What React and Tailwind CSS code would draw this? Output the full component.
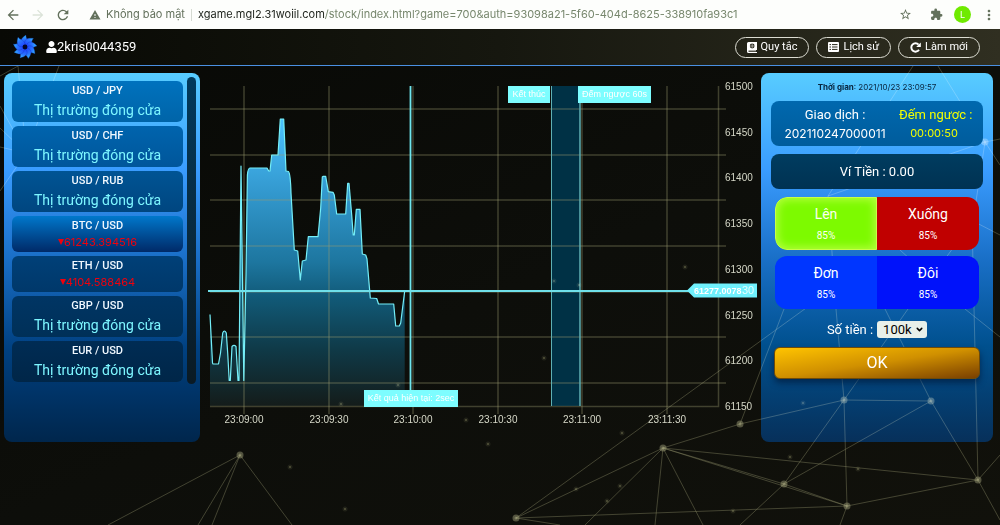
import { useState } from 'react';
import clsx from 'clsx';
import { FaUser } from 'react-icons/fa';
import { ChevronDown } from 'lucide-react';
import {
  MdArrowBack,
  MdArrowForward,
  MdExtension,
  MdMoreVert,
  MdRefresh,
  MdStarBorder,
  MdWarning,
} from 'react-icons/md';

const CLOSED = 'Thị trường đóng cửa';

const PAIRS = [
  { name: 'USD / JPY', bg: 'from-[#0072be] to-[#0064a8]' },
  { name: 'USD / CHF', bg: 'from-[#0064ae] to-[#00569a]' },
  { name: 'USD / RUB', bg: 'from-[#005494] to-[#004680]' },
  { name: 'BTC / USD', price: '61243.394516', bg: 'from-[#0078cc] to-[#002a68]' },
  { name: 'ETH / USD', price: '4104.588464', bg: 'from-[#004078] to-[#00386a]' },
  { name: 'GBP / USD', bg: 'from-[#003564] to-[#003058]' },
  { name: 'EUR / USD', bg: 'from-[#002c54] to-[#002648]' },
];

const X_TICKS = [
  { x: 44, label: '23:09:00' },
  { x: 129, label: '23:09:30' },
  { x: 213, label: '23:10:00' },
  { x: 298, label: '23:10:30' },
  { x: 382, label: '23:11:00' },
  { x: 467, label: '23:11:30' },
];

const Y_TICKS = [
  { y: 13, label: '61500' },
  { y: 59, label: '61450' },
  { y: 104, label: '61400' },
  { y: 150, label: '61350' },
  { y: 196, label: '61300' },
  { y: 242, label: '61250' },
  { y: 287, label: '61200' },
  { y: 333, label: '61150' },
];

const GRID_ROWS = [36, 82, 127, 173, 219, 264, 310];

const PRICE_LINE =
  'M10 241.5 L12.5 290 L13 291 L18.5 291 L20.5 280 L22.7 260 Q24.3 256 26.3 260 L27.7 280 L29.2 307.5 L30.3 307.5 ' +
  'L32 273.5 Q34 271.5 36 273.5 L38 307.5 L39 307.5 L41 93 L43.8 307.5 L46 202 L47.4 102 Q48 95 50 95 L67 95 L68.7 98 L70 98 ' +
  'L71.7 82 L78 82 L80.3 46 L83.7 46 L86 98 L88.5 98.5 Q90.5 101 91 120 L94.3 177 L97.7 178 L100.3 207 L102.3 188 L106 187 ' +
  'L108.3 163.7 L118 163.7 L120.7 135 L122.3 104 L123 103.3 L125.7 103.3 L128.3 118.7 L133 119.3 L134.3 122 L136.7 141 ' +
  'L145.7 141 L147.7 110.3 L149 110.3 L151.7 142 L153.2 162 L154.3 162 L156.3 136.3 L160 136.3 L162.3 181 L165.7 182 ' +
  'L167 186 L170.3 225 L176.7 225.5 L178.5 231 L193.7 231 L195.7 253 L199.3 253 L200.7 250 L204.7 218';

const LINKS = [
  [240, 455, 108, 525], [240, 455, 198, 525], [240, 455, 212, 525], [240, 455, 292, 525],
  [663, 448, 516, 518], [663, 448, 585, 525], [663, 448, 655, 525], [663, 448, 703, 525],
  [663, 448, 784, 484], [663, 448, 978, 480], [663, 448, 740, 424], [663, 448, 847, 506],
  [740, 424, 844, 400], [740, 424, 784, 309], [516, 518, 831, 290], [516, 518, 847, 506],
  [516, 518, 560, 525], [784, 484, 847, 506], [784, 484, 844, 400], [784, 484, 740, 525],
  [784, 484, 931, 401], [847, 506, 844, 400], [847, 506, 840, 525], [844, 400, 931, 401],
  [844, 400, 836, 309], [844, 400, 908, 309], [931, 401, 885, 309], [931, 401, 978, 480],
  [978, 480, 972, 221], [978, 480, 847, 506], [978, 480, 1000, 520], [978, 480, 1000, 455],
  [965, 309, 1000, 337], [965, 309, 900, 250], [836, 309, 828, 196], [908, 309, 973, 221],
  [828, 196, 913, 66], [938, 66, 985, 142], [985, 142, 1000, 139], [985, 142, 1000, 165],
  [985, 142, 973, 221], [973, 221, 1000, 235], [985, 142, 828, 196],
  [26, 153, 18, 66], [26, 153, 59, 66], [26, 153, 0, 106], [26, 153, 0, 128],
  [26, 153, 0, 147], [26, 153, 0, 191], [18, 66, 0, 76],
];

const NODES = [
  [240, 455], [663, 448], [740, 424], [844, 400], [931, 401],
  [978, 480], [784, 484], [847, 506], [516, 518], [985, 142], [26, 153],
];

const SPARKS = [
  [544, 358], [579, 285], [685, 267], [398, 385], [341, 404], [466, 420],
  [622, 433], [488, 444], [576, 489], [620, 486], [607, 501], [290, 467],
  [345, 509], [790, 457], [858, 469], [803, 403], [733, 511], [554, 281],
];

function AddressBar() {
  return (
    <div className="flex h-[29px] items-center bg-[#fdfefc] px-[5px] font-[Inter,sans-serif] text-[#63715c]">
      <MdArrowBack className="size-4 shrink-0" />
      <MdArrowForward className="ml-[9px] size-4 shrink-0 text-[#dbe3d8]" />
      <MdRefresh className="ml-[9px] size-4 shrink-0" />
      <MdWarning className="ml-[18px] size-3 shrink-0" />
      <span className="ml-[5px] shrink-0 text-[11px]">Không bảo mật</span>
      <span className="mx-[6px] h-3 w-px bg-[#d5dad2]" />
      <span className="min-w-0 flex-1 truncate text-[11px] text-[#77876d]">
        <span className="text-[#1c211a]">xgame.mgl2.31woiil.com</span>
        /stock/index.html?game=700&amp;auth=93098a21-5f60-404d-8625-338910fa93c1
      </span>
      <MdStarBorder className="size-[13px] shrink-0" />
      <MdExtension className="ml-[18px] size-[13px] shrink-0" />
      <span className="ml-[11px] flex size-[17px] shrink-0 items-center justify-center rounded-full bg-[#6fea00] text-[9px] text-white">
        L
      </span>
      <MdMoreVert className="ml-2 -mr-1 h-4 w-5 shrink-0" />
    </div>
  );
}

function Logo() {
  return (
    <svg viewBox="-12 -12 24 24" className="size-6 shrink-0" aria-hidden="true">
      <defs>
        <linearGradient id="petal" x1="0" y1="0" x2="0" y2="1">
          <stop offset="0" stopColor="#35c8ff" />
          <stop offset="0.4" stopColor="#2a78ff" />
          <stop offset="1" stopColor="#1f48ff" />
        </linearGradient>
      </defs>
      {[0, 40, 80, 120, 160, 200, 240, 280, 320].map((angle) => (
        <path
          key={angle}
          d="M-2 -2 C-6 -5 -4 -9 1 -12 C0.5 -9 4 -7 2 -2 Z"
          fill="url(#petal)"
          stroke="#1230b8"
          strokeWidth="0.3"
          transform={`rotate(${angle})`}
        />
      ))}
      <circle r="2.4" fill="#04062a" />
    </svg>
  );
}

function RulesIcon() {
  return (
    <svg viewBox="0 0 10 11" className="h-[11px] w-[10px]" aria-hidden="true">
      <path d="M1.5 0H10V8H9V10H10V11H1.5A1.5 1.5 0 0 1 0 9.5V1.5A1.5 1.5 0 0 1 1.5 0Z" fill="#fff" />
      <path d="M1.5 8.6H9V9.8H1.5Z" fill="#2a291d" />
      <circle cx="5.2" cy="4" r="2.4" fill="#2a291d" />
      <path d="M2.8 4H7.6M5.2 1.6V6.4" stroke="#fff" strokeWidth="0.5" />
    </svg>
  );
}

function HistoryIcon() {
  return (
    <svg viewBox="0 0 11 10" className="h-[10px] w-[11px]" aria-hidden="true">
      <rect width="11" height="10" rx="1" fill="#fff" />
      <path d="M1.5 2.6H3M1.5 5H3M1.5 7.4H3M4 2.6H9.5M4 5H9.5M4 7.4H9.5" stroke="#2a291d" strokeWidth="1" />
    </svg>
  );
}

function ReloadIcon() {
  return (
    <svg viewBox="0 0 11 11" className="size-[11px]" aria-hidden="true">
      <path d="M9 7.8A4.2 4.2 0 1 1 8.6 2.6" fill="none" stroke="#fff" strokeWidth="2" />
      <path d="M10.8 0.4V5H6.2Z" fill="#fff" />
    </svg>
  );
}

function HeaderButton({ icon, children }) {
  return (
    <button className="flex h-[21px] items-center gap-1 rounded-full border border-[#dcdcd2] px-[11px] text-[11px] text-white">
      {icon}
      {children}
    </button>
  );
}

function Header() {
  return (
    <header className="flex h-[37px] items-center border-b border-[#4a90e2] bg-linear-to-r from-[#080905] via-[#16170f] to-[#302f21] pr-5 pl-[13px]">
      <Logo />
      <FaUser className="ml-[9px] h-[12px] w-[11px] text-white" />
      <span className="text-[13px] text-white">2kris0044359</span>
      <nav className="ml-auto flex gap-[7px]">
        <HeaderButton icon={<RulesIcon />}>Quy tắc</HeaderButton>
        <HeaderButton icon={<HistoryIcon />}>Lịch sử</HeaderButton>
        <HeaderButton icon={<ReloadIcon />}>Làm mới</HeaderButton>
      </nav>
    </header>
  );
}

function Network() {
  return (
    <svg
      viewBox="0 66 1000 459"
      preserveAspectRatio="xMidYMin slice"
      className="pointer-events-none absolute inset-0 size-full mix-blend-screen"
      aria-hidden="true"
    >
      <g stroke="#8a8a64" strokeOpacity="0.4">
        {LINKS.map(([x1, y1, x2, y2], i) => (
          <line key={i} x1={x1} y1={y1} x2={x2} y2={y2} />
        ))}
      </g>
      {NODES.map(([x, y]) => (
        <g key={`${x}-${y}`} fill="#a0a078">
          <circle cx={x} cy={y} r="3.5" fillOpacity="0.45" />
          <circle cx={x} cy={y} r="1.5" fillOpacity="0.5" />
        </g>
      ))}
      {SPARKS.map(([x, y]) => (
        <g key={`${x}-${y}`} fill="#a0a070">
          <circle cx={x} cy={y} r="2.5" fillOpacity="0.12" />
          <circle cx={x} cy={y} r="1" fillOpacity="0.4" />
        </g>
      ))}
    </svg>
  );
}

function PairList({ selected, onSelect }) {
  return (
    <aside className="rounded-lg bg-[linear-gradient(#58ccff,#3a9cff_26%,#1a6fc8_50%,#004080_75%,#00264c)]">
      <div className="relative z-10 flex gap-1 pt-1 pr-1 pl-2">
        <ul className="flex flex-1 flex-col gap-1 pt-1">
          {PAIRS.map((pair) => (
            <li key={pair.name}>
              <button
                onClick={() => onSelect(pair.name)}
                aria-pressed={selected === pair.name}
                className={clsx(
                  'flex w-full flex-col items-center rounded-md bg-linear-to-b pt-[2px]',
                  pair.price ? 'h-9' : 'h-[41px]',
                  pair.bg
                )}
              >
                <span className="text-[11px] leading-4 font-medium text-[#f0f8ff]">{pair.name}</span>
                {pair.price ? (
                  <span className="flex items-center font-[Inter,sans-serif] text-[11px] leading-4 text-[#f0000c]">
                    <svg viewBox="0 0 6 6" className="size-[6px]" aria-hidden="true">
                      <path d="M0 0H6L3 6Z" fill="currentColor" />
                    </svg>
                    {pair.price}
                  </span>
                ) : (
                  <span className="text-[14px] leading-[22px] text-[#7df6ff]">{CLOSED}</span>
                )}
              </button>
            </li>
          ))}
        </ul>
        <div className="h-[307px] w-[9px] rounded-full bg-linear-to-b from-[#003a5c] to-[#0a1a24]" />
      </div>
    </aside>
  );
}

function ChartTag({ x, y, width, children }) {
  return (
    <g>
      <rect x={x} y={y} width={width} height="17" fill="#7dfdff" />
      <text x={x + width / 2} y={y + 11} textAnchor="middle" fill="#fff" fontSize="9">
        {children}
      </text>
    </g>
  );
}

function Chart() {
  return (
    <svg viewBox="0 0 561 369" className="h-auto w-full font-['Liberation_Sans',Arial,sans-serif]" role="img" aria-label="BTC / USD">
      <defs>
        <linearGradient id="area" gradientUnits="userSpaceOnUse" x1="0" y1="46" x2="0" y2="333">
          <stop offset="0" stopColor="#4cc2ff" />
          <stop offset="0.25" stopColor="#3399cf" />
          <stop offset="0.5" stopColor="#1d769f" />
          <stop offset="0.62" stopColor="#115a78" />
          <stop offset="0.8" stopColor="#0f3a48" />
          <stop offset="1" stopColor="#141c1a" />
        </linearGradient>
      </defs>

      <path d={`${PRICE_LINE} L204.7 333 L10 333 Z`} fill="url(#area)" />
      <rect x="352" y="13" width="28" height="320" fill="#003145" />

      <g stroke="#9a9a70" strokeOpacity="0.36" strokeWidth="1.5">
        {X_TICKS.map(({ x }) => (
          <line key={x} x1={x} y1="13" x2={x} y2="341" />
        ))}
        {GRID_ROWS.map((y) => (
          <line key={y} x1="10" y1={y} x2="526" y2={y} />
        ))}
        <path d="M10 333.5H518.5V13" fill="none" />
      </g>

      <g stroke="#5fb0b4">
        <line x1="351.5" y1="13" x2="351.5" y2="333" />
        <line x1="380" y1="13" x2="380" y2="333" strokeWidth="1.5" />
      </g>
      <path d={PRICE_LINE} fill="none" stroke="#74eef8" strokeWidth="1.2" strokeLinejoin="round" />
      <line x1="210.5" y1="13" x2="210.5" y2="317" stroke="#6fe6ee" strokeWidth="1.8" />
      <line x1="8" y1="218" x2="490" y2="218" stroke="#6fe0ea" strokeWidth="1.8" />

      <g fill="#d6d8c8" fontSize="10">
        {X_TICKS.map(({ x, label }) => (
          <text key={label} x={x} y="350" textAnchor="middle">
            {label}
          </text>
        ))}
        {Y_TICKS.map(({ y, label }) => (
          <text key={label} x="525" y={y + 4}>
            {label}
          </text>
        ))}
      </g>

      <path d="M487 217.5L494 210.5H557V224.5H494Z" fill="#6ff0fc" />
      <text x="494" y="221" fill="#fff" fontSize="9" fontWeight="bold">
        61277.0078
      </text>
      <text x="542" y="221" fill="#e4ffff" fontSize="11">
        30
      </text>

      <ChartTag x={308} y={13} width={42}>Kết thúc</ChartTag>
      <ChartTag x={378} y={13} width={73}>Đếm ngược 60s</ChartTag>
      <ChartTag x={164} y={317} width={94}>Kết quả hiện tại: 2sec</ChartTag>
    </svg>
  );
}

function BetButton({ title, className }) {
  return (
    <button className={clsx('flex h-[53px] flex-col items-center justify-center gap-1', className)}>
      <span className="text-[14px] leading-5">{title}</span>
      <span className="text-[10px] leading-4">85%</span>
    </button>
  );
}

function TradePanel() {
  const [amount, setAmount] = useState('100k');

  return (
    <aside className="rounded-lg bg-[linear-gradient(#58ccff,#3a9cff_26%,#1a70c8_50%,#00508e_74%,#07305a)]">
      <div className="relative z-10 px-[10px] pt-2">
        <p className="text-center font-[Inter,sans-serif] text-[8px] leading-3 text-[#08243c]">
          <strong className="font-bold">Thời gian</strong>: 2021/10/23 23:09:57
        </p>

        <div className="mt-2 grid h-[45px] grid-cols-[128px_70px] content-center rounded-lg bg-linear-to-b from-[#0068ae] to-[#005c9c] text-center text-white">
          <span className="text-[13px] leading-[19px]">Giao dịch :</span>
          <span className="text-[13px] leading-[19px] whitespace-nowrap text-[#f2ff00]">Đếm ngược :</span>
          <span className="font-[Inter,sans-serif] text-[12px] leading-[19px]">202110247000011</span>
          <span className="font-[Inter,sans-serif] text-[11px] leading-[19px] text-[#f2ff00]">00:00:50</span>
        </div>

        <div className="mt-2 flex h-[35px] items-center justify-center rounded-lg bg-linear-to-b from-[#003c60] to-[#003252] text-[13px] text-white">
          Ví Tiền : 0.00
        </div>

        <div className="mx-1 mt-2 grid grid-cols-2 overflow-hidden rounded-xl">
          <BetButton
            title="Lên"
            className="rounded-l-xl border border-[#c8ff48] bg-[#7dfa00] text-[#fbfff2] shadow-[inset_0_0_8px_2px_#b4ff3c]"
          />
          <BetButton title="Xuống" className="bg-[#c00000] text-white" />
        </div>

        <div className="mx-1 mt-[6px] grid grid-cols-2 overflow-hidden rounded-xl">
          <BetButton title="Đơn" className="bg-[#0036ff] text-white" />
          <BetButton title="Đôi" className="bg-[#0012fa] text-white" />
        </div>

        <div className="mt-3 flex items-center justify-center gap-1">
          <label htmlFor="amount" className="text-[13px] leading-4 text-white">
            Số tiền :
          </label>
          <div className="relative">
            <select
              id="amount"
              value={amount}
              onChange={(e) => setAmount(e.target.value)}
              className="block h-[17px] w-[50px] appearance-none rounded-[3px] bg-[#e8f0ea] pl-[6px] text-[13px] leading-4 text-black"
            >
              <option>100k</option>
              <option>200k</option>
              <option>500k</option>
            </select>
            <ChevronDown className="pointer-events-none absolute top-1 right-[3px] size-[9px] text-black" strokeWidth={4} />
          </div>
        </div>

        <button className="mx-[3px] mt-[9px] flex h-8 w-[calc(100%-6px)] items-center justify-center rounded-md border border-[#6e4a08] bg-linear-to-br from-[#ffc400] via-[#d09000] to-[#7a4000] text-[16px] text-white shadow-[0_4px_6px_rgba(0,20,50,0.6)]">
          OK
        </button>
      </div>
    </aside>
  );
}

export default function App() {
  const [selected, setSelected] = useState('BTC / USD');

  return (
    <div className="flex min-h-screen flex-col bg-[#0b0c08] font-[Roboto,sans-serif]">
      <AddressBar />
      <Header />
      <main className="relative grid flex-1 grid-cols-[196px_minmax(0,1fr)_232px] content-start bg-linear-to-br from-[#080906] via-[#0d0e0a] to-[#11110b] pt-[7px] pr-[7px] pl-1">
        <PairList selected={selected} onSelect={setSelected} />
        <Chart />
        <TradePanel />
        <Network />
      </main>
    </div>
  );
}
